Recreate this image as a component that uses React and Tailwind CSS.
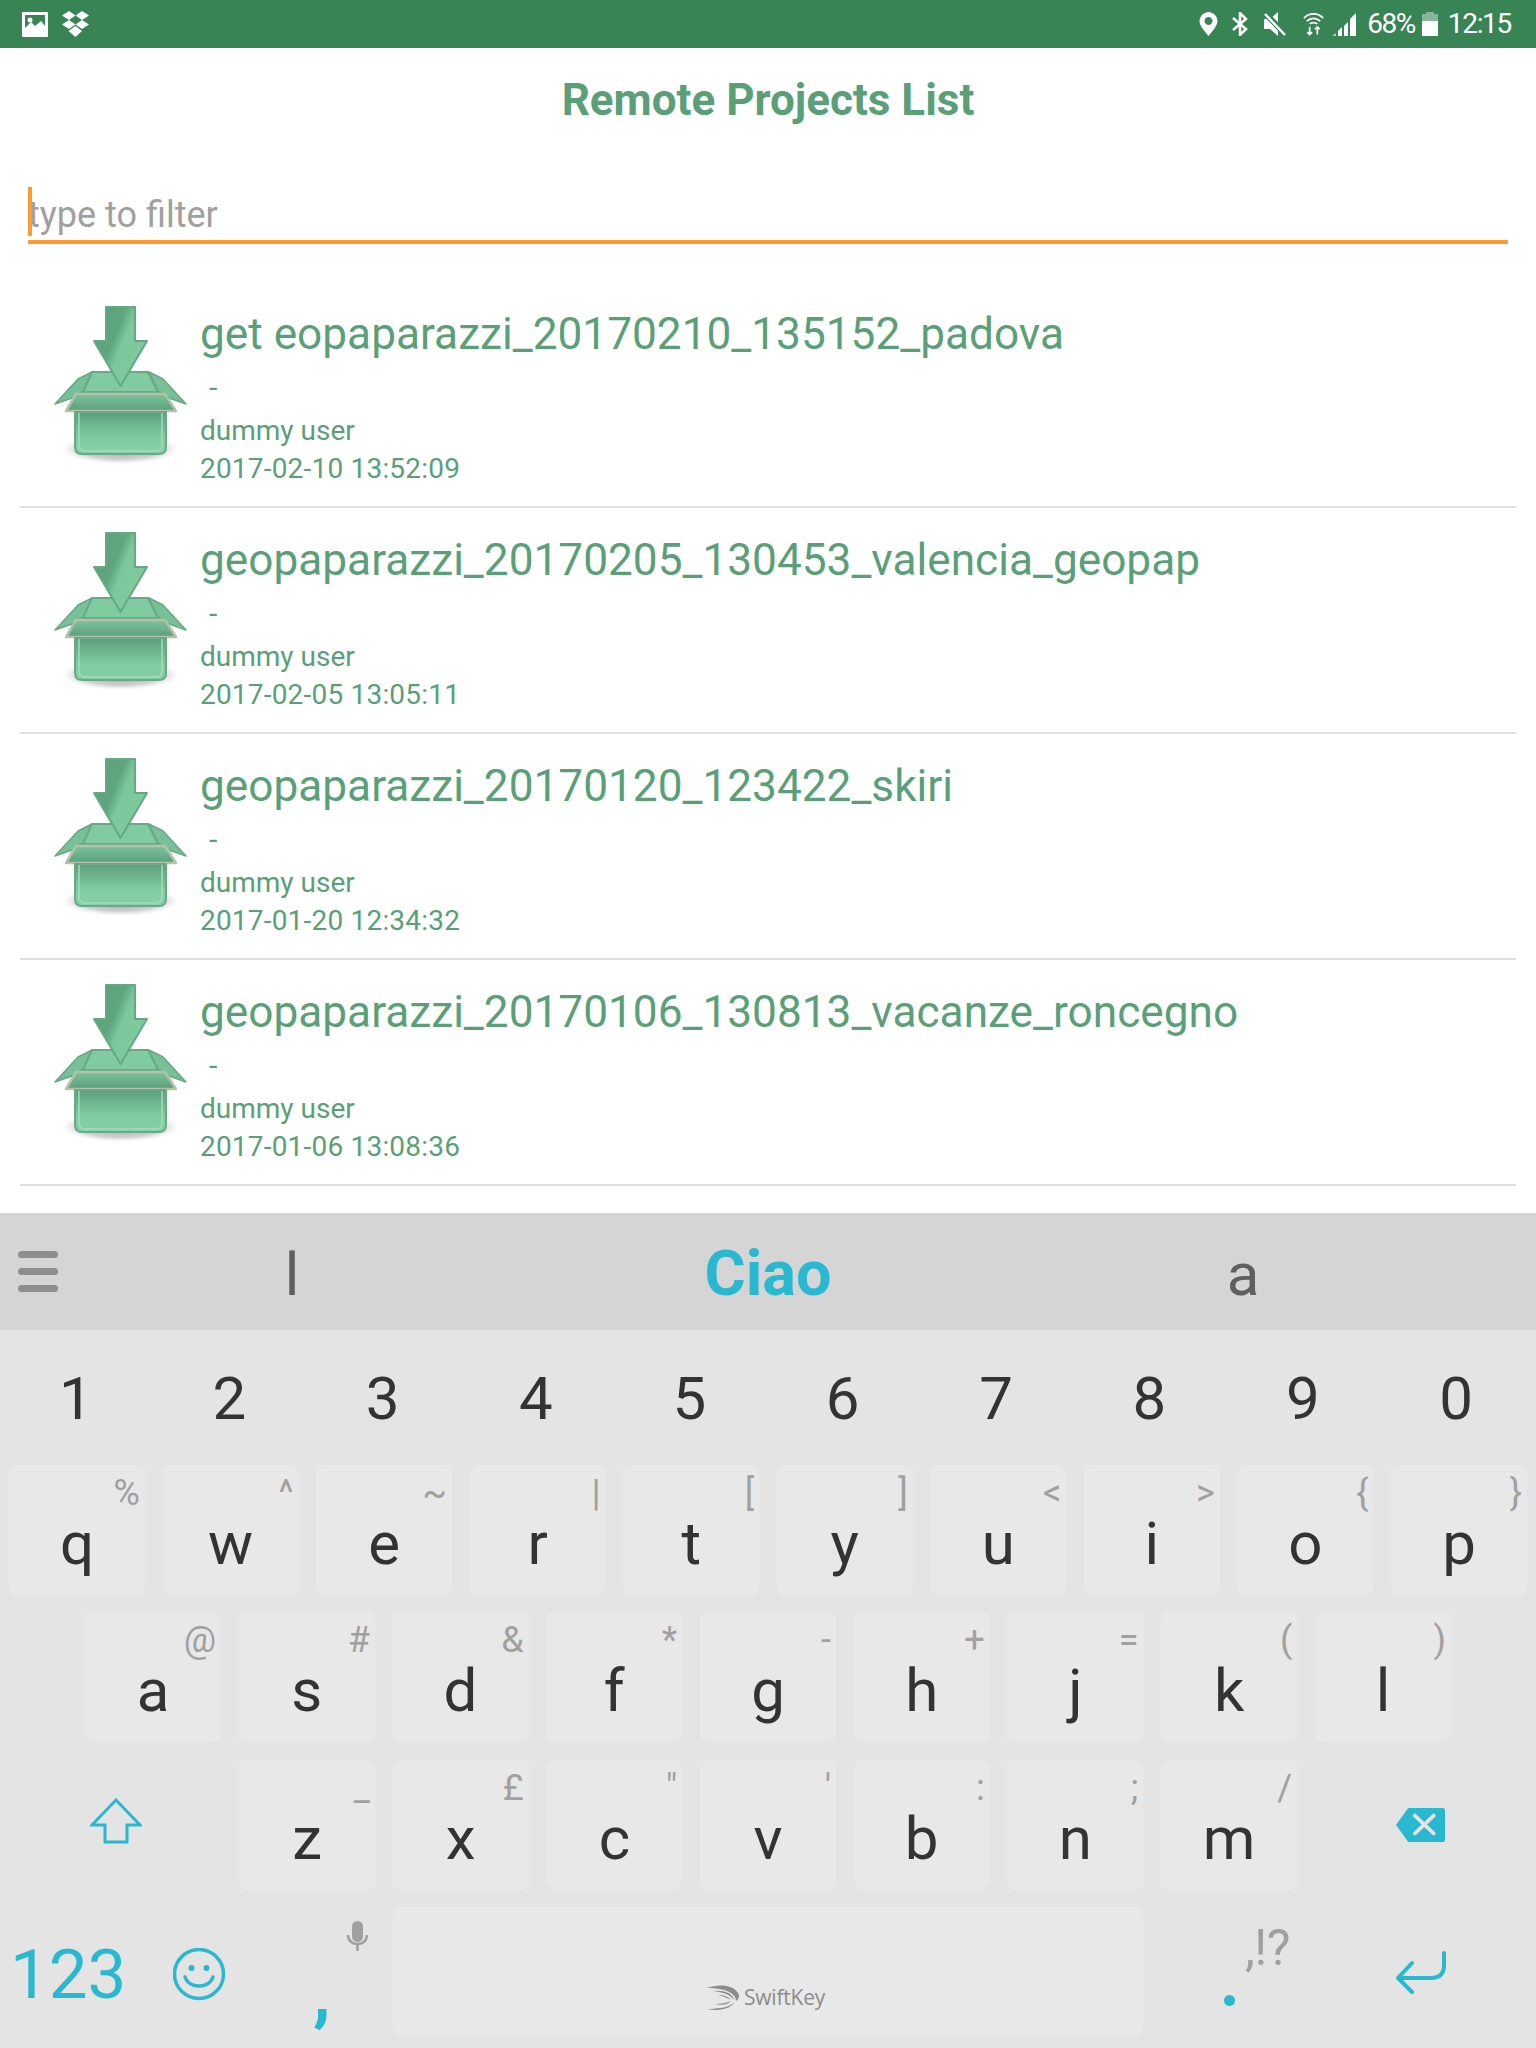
const projects = [
  { name: "get eopaparazzi_20170210_135152_padova", date: "2017-02-10 13:52:09" },
  { name: "geopaparazzi_20170205_130453_valencia_geopap", date: "2017-02-05 13:05:11" },
  { name: "geopaparazzi_20170120_123422_skiri", date: "2017-01-20 12:34:32" },
  { name: "geopaparazzi_20170106_130813_vacanze_roncegno", date: "2017-01-06 13:08:36" },
];

const digits = ["1", "2", "3", "4", "5", "6", "7", "8", "9", "0"];

const row1 = [
  ["q", "%"], ["w", "^"], ["e", "~"], ["r", "|"], ["t", "["],
  ["y", "]"], ["u", "<"], ["i", ">"], ["o", "{"], ["p", "}"],
];
const row2 = [
  ["a", "@"], ["s", "#"], ["d", "&"], ["f", "*"], ["g", "-"],
  ["h", "+"], ["j", "="], ["k", "("], ["l", ")"],
];
const row3 = [
  ["z", "_"], ["x", "£"], ["c", "\""], ["v", "'"], ["b", ":"], ["n", ";"], ["m", "/"],
];

function BoxIcon({ id }) {
  return (
    <svg width="134" height="160" viewBox="0 0 134 160" className="shrink-0 mt-[1px]">
      <defs>
        <linearGradient id={`arrow${id}`} x1="0" y1="0" x2="1" y2="0.6">
          <stop offset="0" stopColor="#5a9f78" />
          <stop offset="0.45" stopColor="#5fa67f" />
          <stop offset="0.6" stopColor="#7cc79b" />
          <stop offset="1" stopColor="#7fcb9e" />
        </linearGradient>
        <linearGradient id={`front${id}`} x1="0" y1="0" x2="0" y2="1">
          <stop offset="0" stopColor="#5c9f7b" />
          <stop offset="0.6" stopColor="#80cb9f" />
          <stop offset="1" stopColor="#86d0a6" />
        </linearGradient>
        <linearGradient id={`lip${id}`} x1="0" y1="0" x2="0" y2="1">
          <stop offset="0" stopColor="#7cc49b" />
          <stop offset="1" stopColor="#5c9f7b" />
        </linearGradient>
        <radialGradient id={`shadow${id}`} cx="0.5" cy="0.5" r="0.5">
          <stop offset="0" stopColor="#777" stopOpacity="0.75" />
          <stop offset="0.7" stopColor="#999" stopOpacity="0.45" />
          <stop offset="1" stopColor="#ccc" stopOpacity="0" />
        </radialGradient>
      </defs>
      <ellipse cx="66.500" cy="143" rx="59" ry="15" fill={`url(#shadow${id})`} />
      <path d="M1 98 L24 73 L38 66 L29 85 L18 92 Z" fill="#78c097" stroke="#67a985" strokeWidth="1.500" strokeLinejoin="round" />
      <path d="M132 98 L109 73 L95 66 L104 85 L115 92 Z" fill="#78c097" stroke="#67a985" strokeWidth="1.500" strokeLinejoin="round" />
      <path d="M38 66 H94 L104 86 H29 Z" fill="#80cb9f" stroke="#6aa988" strokeWidth="2" />
      <path d="M22 88 H111 L122 105 H12 Z" fill={`url(#lip${id})`} stroke="#b3c2a8" strokeWidth="2.500" strokeLinejoin="round" />
      <path d="M21 106 H112 V141 Q112 148 105 148 H28 Q21 148 21 141 Z" fill={`url(#front${id})`} stroke="#6ba888" strokeWidth="2" />
      <path d="M25 107 V139 Q25 145 31 145 H102 Q108 145 108 139 V107" fill="none" stroke="#a5dcbc" strokeWidth="1.500" />
      <path d="M52 1 H81 V35 H93 L66.500 80 L40 35 H52 Z" fill={`url(#arrow${id})`} stroke="#66a883" strokeWidth="2" strokeLinejoin="round" />
    </svg>
  );
}

function ProjectRow({ project, id }) {
  return (
    <div className="mx-[20px] h-[226px] border-b-2 border-[#e0e0e0] flex pl-[34px] pt-[23px] gap-[12px]">
      <BoxIcon id={id} />
      <div className="text-[#5a9f78] flex flex-col">
        <div className="text-[44.2px] leading-[50px] mt-[4px]">{project.name}</div>
        <div className="text-[30px] leading-[40px] mt-[9px] pl-[9px]">-</div>
        <div className="text-[28px] leading-[38px] mt-[4px]">dummy user</div>
        <div className="text-[28px] leading-[38px] tracking-[0.2px]">{project.date}</div>
      </div>
    </div>
  );
}

function Key({ letter, hint }) {
  return (
    <div className="relative h-[130px] rounded-[8px] bg-[#e8e8e8] flex justify-center pt-[44px]">
      <span className="text-[60px] leading-[70px] text-[#333]">{letter}</span>
      <span className="absolute right-[5px] top-[8px] text-[36px] leading-[40px] text-[#a0a0a0]">{hint}</span>
    </div>
  );
}

function StatusBar() {
  return (
    <div className="h-[48px] bg-[#388455] flex items-center justify-between pl-[22px] pr-[25px] text-white">
      <div className="flex items-center gap-[13px]">
        <svg width="26" height="25" viewBox="0 0 26 25">
          <path fillRule="evenodd" d="M1 0 H25 a1 1 0 0 1 1 1 V24 a1 1 0 0 1 -1 1 H1 a1 1 0 0 1 -1 -1 V1 a1 1 0 0 1 1 -1 Z M3 3 V16 L9 10 L13 14 L19 9 L23 14 V3 Z" fill="#fff" />
          <circle cx="8" cy="8" r="2.500" fill="#fff" />
        </svg>
        <svg width="29" height="26" viewBox="0 0 29 26" fill="#fff">
          <path d="M8 0 L14.500 4.500 L8 9 L1 4.500 Z" />
          <path d="M21 0 L28 4.500 L21 9 L14.500 4.500 Z" />
          <path d="M8 9 L14.500 13.500 L8 18 L1 13.500 Z" />
          <path d="M21 9 L28 13.500 L21 18 L14.500 13.500 Z" />
          <path d="M14.500 15 L21 20 L14.500 26 L7.500 20 Z" />
        </svg>
      </div>
      <div className="flex items-center">
        <svg width="19" height="24" viewBox="0 0 18 24" className="mr-[14px]">
          <path fillRule="evenodd" d="M9 0 a9 9 0 0 1 9 9 C18 14 12 20 9 24 C6 20 0 14 0 9 a9 9 0 0 1 9 -9 Z M9 5 a4 4 0 1 0 0.010 0 Z" fill="#fff" />
        </svg>
        <svg width="16" height="24" viewBox="0 0 16 24" fill="none" stroke="#fff" strokeWidth="2.500" className="mr-[16px]">
          <path d="M1 6 L14 17 L8 23 V1 L14 7 L1 18" />
        </svg>
        <svg width="22" height="24" viewBox="0 0 22 24" className="mr-[17px]">
          <path d="M0 7 H6 L14 0 V24 L6 17 H0 Z" fill="#fff" />
          <path d="M1 1 L21 22" stroke="#388455" strokeWidth="6" />
          <path d="M1 2 L21 23" stroke="#fff" strokeWidth="2.500" />
        </svg>
        <svg width="21" height="24" viewBox="0 0 22 24" fill="none" stroke="#fff" strokeWidth="1.800" className="mr-[8px]">
          <path d="M1 6 C6 0 16 0 21 6 M4 9 C8 5 14 5 18 9 M7 12 C9 10 13 10 15 12" />
          <path d="M7 15 V23 M4.500 20.500 L7 23 L9.500 20.500 M15 23 V15 M12.500 17.500 L15 15 L17.500 17.500" />
        </svg>
        <svg width="24" height="24" viewBox="0 0 24 24" fill="#fff" className="mr-[11px]">
          <path d="M0 24 H4 V21 L0 24 Z" opacity="0.6" />
          <path d="M6 24 H10 V15 L6 19 Z" />
          <path d="M12 24 H16 V10 L12 14 Z" />
          <path d="M18 24 H24 V1 L18 7 Z" />
        </svg>
        <span className="text-[28px] leading-[48px] mr-[7px] tracking-[-1.500px]">68%</span>
        <svg width="16" height="24" viewBox="0 0 16 24" fill="#fff" className="mr-[10px]">
          <path d="M4 0 H12 V2 H16 V9 H0 V2 H4 Z" opacity="0.4" />
          <path d="M0 9 H16 V24 H0 Z" />
        </svg>
        <span className="text-[28px] leading-[48px] tracking-[-1.300px]">12:15</span>
      </div>
    </div>
  );
}

function SuggestionBar() {
  return (
    <div className="h-[117px] bg-[#d5d5d5] flex items-center">
      <div className="w-[136px] pl-[18px] flex flex-col gap-[10px]">
        <div className="w-[40px] h-[7px] rounded-full bg-[#8e8e8e]" />
        <div className="w-[40px] h-[7px] rounded-full bg-[#8e8e8e]" />
        <div className="w-[40px] h-[7px] rounded-full bg-[#8e8e8e]" />
      </div>
      <div className="flex-1 ml-[-136px] grid grid-cols-3 items-baseline text-center mt-[6px]">
        <span className="text-[60px] text-[#5f5f5f] leading-[70px] ml-[72px]">l</span>
        <span className="text-[63px] font-bold text-[#2ab8d0] leading-[70px]">Ciao</span>
        <span className="text-[60px] text-[#5f5f5f] leading-[70px] mr-[74px]">a</span>
      </div>
    </div>
  );
}

function BottomRow() {
  return (
    <div className="flex h-[128px] mt-[17px]">
      <div className="w-[166px] pl-[10px] text-[69px] leading-[90px] text-[#2ab8d0] pt-[23px]">123</div>
      <div className="w-[64px] pt-[41px] pl-[7px]">
        <svg width="54" height="54" viewBox="0 0 54 54" fill="none" stroke="#2ab8d0">
          <circle cx="26" cy="26" r="24.500" strokeWidth="3.500" />
          <circle cx="18.500" cy="20" r="3" fill="#2ab8d0" stroke="none" />
          <circle cx="33.500" cy="20" r="3" fill="#2ab8d0" stroke="none" />
          <path d="M12 29 C16 41 36 41 40 29" strokeWidth="3.500" strokeLinecap="round" />
        </svg>
      </div>
      <div className="relative w-[163px]">
        <span className="absolute left-[83px] top-[42px] text-[72px] leading-[90px] font-bold text-[#2ab8d0]">,</span>
        <svg width="24" height="32" viewBox="0 0 24 32" fill="none" className="absolute left-[116px] top-[14px]">
          <rect x="6" y="0" width="11" height="21" rx="5.500" fill="#a0a0a0" />
          <path d="M2 14 C2 26 21 26 21 14 M11.500 24 V30" stroke="#a0a0a0" strokeWidth="2.500" />
        </svg>
      </div>
      <div className="w-[750px] h-[128px] rounded-[8px] bg-[#e8e8e8] flex items-center justify-center pt-[53px] pr-[4px] gap-[4px]">
        <svg width="33" height="26" viewBox="0 0 33 26" fill="#8c8c8c">
          <path d="M0 3 C10 -1 26 -1 31 8 C33 11 32 14 29 16 C29 8 18 3 0 3 Z" />
          <path d="M6 6 C16 5 26 8 27 15 C24 10 16 7 6 6 Z" />
          <path d="M11 10 C17 10 22 12 24 15 C20 13 16 11 11 10 Z" />
          <path d="M0 24 C12 24 24 22 27 17 C26 22 14 27 0 24 Z" />
          <path d="M8 19 C14 19 20 18 24 16 C22 19 16 21 8 19 Z" />
        </svg>
        <span className="font-['Open_Sans'] text-[21px] text-[#8c8c8c] tracking-[-0.200px]">SwiftKey</span>
      </div>
      <div className="relative flex-1">
        <span className="absolute left-[81px] top-[88px] w-[11px] h-[11px] rounded-full bg-[#2ab8d0]" />
        <span className="absolute left-[102px] top-[11px] text-[50px] leading-[60px] text-[#a0a0a0] tracking-[-0.500px]">,!?</span>
        <svg width="50" height="43" viewBox="0 0 50 43" fill="none" stroke="#2ab8d0" strokeWidth="4" strokeLinecap="round" strokeLinejoin="round" className="absolute left-[253px] top-[44px]">
          <path d="M48 2 V14 Q48 27 35 27 H2 M16 12 L2 27 L16 41" />
        </svg>
      </div>
    </div>
  );
}

export default function App() {
  return (
    <div className="w-[1536px] h-[2048px] bg-white overflow-hidden font-['Roboto',sans-serif] flex flex-col">
      <StatusBar />
      <h1 className="text-center text-[44px] leading-[50px] font-bold text-[#5a9f78] mt-[27px]">Remote Projects List</h1>
      <div className="relative mx-[28px] mt-[61px] h-[58px] border-b-[4px] border-[#ff9a33] text-[36px] leading-[58px] text-[#a0a0a0]">
        type to filter
        <span className="absolute left-0 top-[1px] w-[4px] h-[49px] bg-[#ff9a33]" />
      </div>
      <div className="mt-[38px]">
        {projects.map((p, i) => (
          <ProjectRow key={p.name} project={p} id={i} />
        ))}
      </div>
      <div className="mt-[27px] flex-1 bg-[#e4e4e4] flex flex-col">
        <SuggestionBar />
        <div className="h-[135px] pl-[8px] pr-[12px] pt-[2px] grid grid-cols-10 gap-x-[17.6px] items-center">
          {digits.map((d) => (
            <span key={d} className="text-center text-[60px] leading-[70px] text-[#333]">{d}</span>
          ))}
        </div>
        <div className="px-[9px] grid grid-cols-10 gap-x-[17.6px]">
          {row1.map(([l, h]) => (
            <Key key={l} letter={l} hint={h} />
          ))}
        </div>
        <div className="mt-[17px] px-[85px] grid grid-cols-9 gap-x-[17.6px]">
          {row2.map(([l, h]) => (
            <Key key={l} letter={l} hint={h} />
          ))}
        </div>
        <div className="mt-[18px] flex">
          <div className="w-[239px] flex items-center justify-center pr-[8px] pb-[8px]">
            <svg width="52" height="46" viewBox="0 0 52 46" fill="none" stroke="#2ab8d0" strokeWidth="3">
              <path d="M26 2 L50 27 H37 V44 H15 V27 H2 Z" />
            </svg>
          </div>
          <div className="w-[1058px] grid grid-cols-7 gap-x-[17.6px]">
            {row3.map(([l, h]) => (
              <Key key={l} letter={l} hint={h} />
            ))}
          </div>
          <div className="flex-1 flex items-center justify-center pl-[8px]">
            <svg width="51" height="34" viewBox="0 0 52 36">
              <path d="M13 0 H49 a3 3 0 0 1 3 3 V33 a3 3 0 0 1 -3 3 H13 L0 18 Z" fill="#2ab8d0" />
              <path d="M20 8 L40 27 M40 8 L20 27" stroke="#e4e4e4" strokeWidth="4" strokeLinecap="round" />
            </svg>
          </div>
        </div>
        <BottomRow />
      </div>
    </div>
  );
}
